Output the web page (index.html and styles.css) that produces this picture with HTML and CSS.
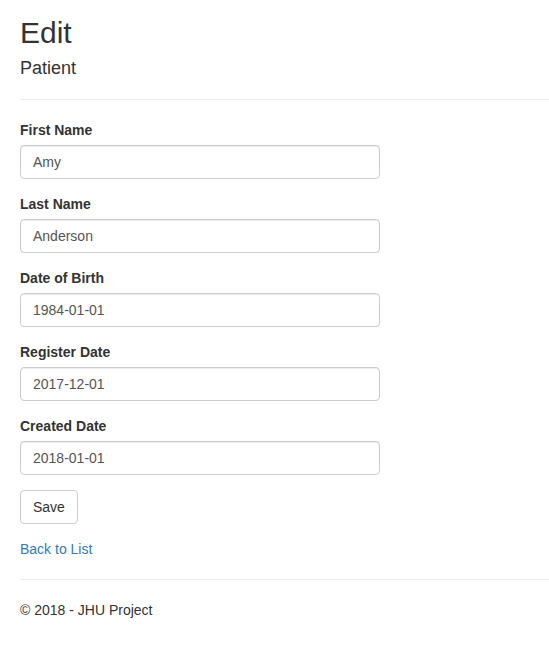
FILE: index.html
```html
<!DOCTYPE html>
<html>
<head>
<meta charset="utf-8">
<title>Edit</title>
<link rel="stylesheet" href="styles.css">
</head>
<body>
<div class="container">
  <h2 class="title">Edit</h2>
  <h4 class="subtitle">Patient</h4>
  <hr class="rule">
  <form class="form">
    <div class="form-group">
      <label class="label">First Name</label>
      <input class="form-control" type="text" value="Amy">
    </div>
    <div class="form-group">
      <label class="label">Last Name</label>
      <input class="form-control" type="text" value="Anderson">
    </div>
    <div class="form-group">
      <label class="label">Date of Birth</label>
      <input class="form-control" type="text" value="1984-01-01">
    </div>
    <div class="form-group">
      <label class="label">Register Date</label>
      <input class="form-control" type="text" value="2017-12-01">
    </div>
    <div class="form-group">
      <label class="label">Created Date</label>
      <input class="form-control" type="text" value="2018-01-01">
    </div>
    <div class="form-group">
      <button class="btn" type="button">Save</button>
    </div>
  </form>
  <div class="back"><a class="link" href="#">Back to List</a></div>
  <hr class="rule">
  <footer class="footer"><p class="copy">© 2018 - JHU Project</p></footer>
</div>
</body>
</html>
```
FILE: styles.css
```css
* { box-sizing: border-box; }
html, body { margin: 0; padding: 0; }
body {
  font-family: "Liberation Sans", Arial, Helvetica, sans-serif;
  font-size: 14px;
  line-height: 1.42857143;
  color: #333;
  background: #fff;
}
.container { padding: 0 0 0 20px; }
.title {
  font-size: 30px;
  font-weight: 500;
  line-height: 1.1;
  margin: 16px 0 10px;
}
.subtitle {
  font-size: 18px;
  font-weight: 500;
  line-height: 1.1;
  margin: 10px 0 10px;
}
.rule {
  margin: 20px 0;
  border: 0;
  border-top: 1px solid #eee;
  height: 0;
}
.form { margin: 0; }
.form-group { margin-bottom: 15px; }
.label {
  display: block;
  font-weight: bold;
  margin-bottom: 5px;
  line-height: 20px;
}
.form-control {
  display: block;
  width: 360px;
  height: 34px;
  padding: 6px 12px;
  font-family: inherit;
  font-size: 14px;
  line-height: 1.42857143;
  color: #555;
  background: #fff;
  border: 1px solid #ccc;
  border-radius: 4px;
  box-shadow: inset 0 1px 1px rgba(0,0,0,.075);
  margin: 0;
}
.btn {
  display: inline-block;
  height: 34px;
  padding: 6px 12px;
  font-family: inherit;
  font-size: 14px;
  line-height: 1.42857143;
  color: #333;
  background: #fff;
  border: 1px solid #ccc;
  border-radius: 4px;
  margin: 0;
}
.back { line-height: 20px; }
.link { color: #337ab7; text-decoration: none; }
.footer { }
.copy { margin: 0 0 10px; }
```
